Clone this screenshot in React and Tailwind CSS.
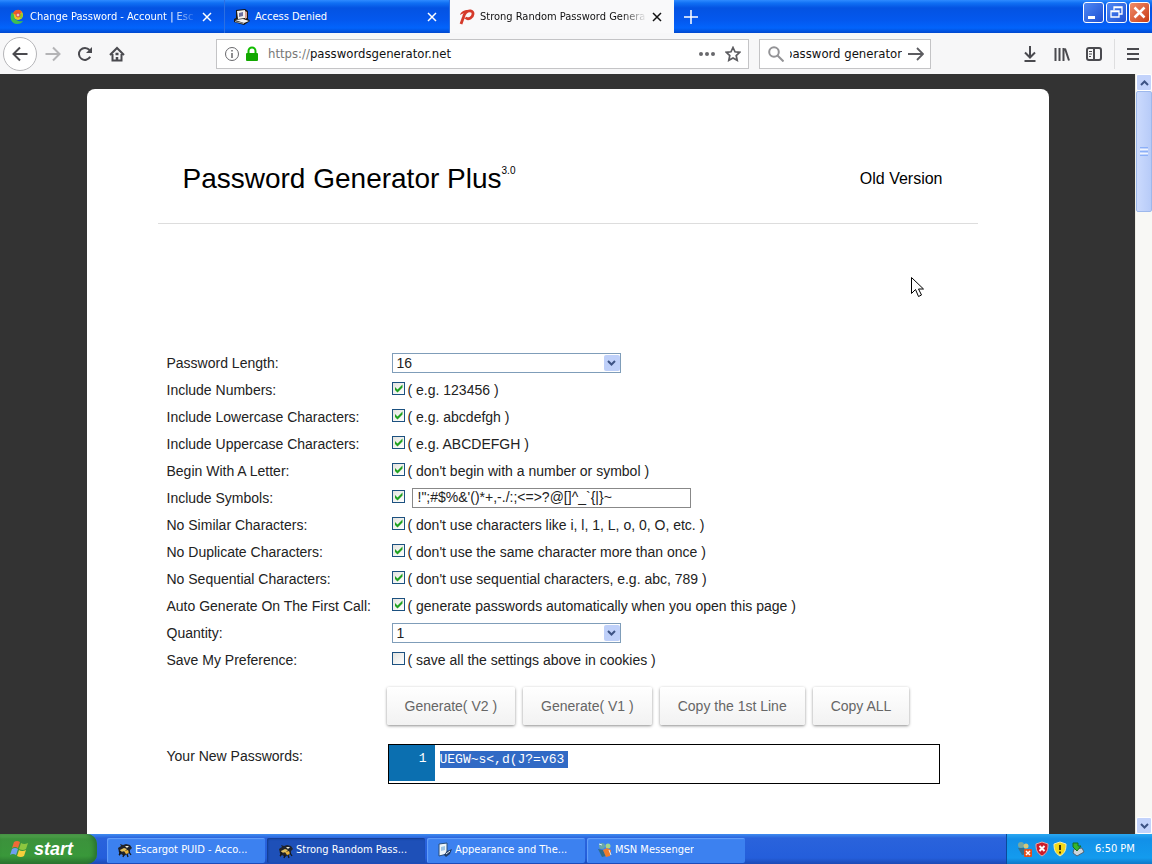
import React from "react";

const ui = "font-['DejaVu_Sans_Condensed','DejaVu_Sans',sans-serif]";

function Bee() {
  return (
    <svg viewBox="0 0 16 16" className="size-4 shrink-0" aria-hidden="true">
      <path d="M1 6l3-2-1-2 3 1 3-1 4 1 2 3-2 2 0 3-3 1-3 2-3-2-2 2 0-4z" fill="#20242c" />
      <path d="M3 8l4-2 3 1-2 2-4 1z" fill="#e0c060" />
      <path d="M8 4l4 0-2 2z" fill="#f4f0dc" />
      <path d="M7 9l4-1 1 3-3 1z" fill="#e7b23a" />
      <path d="M2 9l2 1-2 3M12 10l2 3M7 12l-1 3M10 12l1 3" stroke="#15171c" strokeWidth="1.300" fill="none" />
    </svg>
  );
}

function Panel() {
  return (
    <svg viewBox="0 0 16 16" className="size-4 shrink-0" aria-hidden="true">
      <path d="M2 2l8-1v11l-8 2z" fill="#eef5fa" stroke="#274d7d" />
      <path d="M4 5l4-1v4l-4 1z" fill="#9dc4e5" />
      <path d="M7 13l3-4 5-2-2 5-4 3z" fill="#203c66" />
      <path d="M9 12l4-3" stroke="#e7edf2" />
    </svg>
  );
}

function Buddies() {
  return (
    <svg viewBox="0 0 16 16" className="size-4 shrink-0" aria-hidden="true">
      <circle cx="5" cy="4" r="3" fill="#69a8a8" />
      <path d="M1 7l5 1 3 6-4 1-2-4z" fill="#2d6c8c" />
      <circle cx="11" cy="4" r="2.5" fill="#a5d58b" />
      <path d="M6 8l4-2 4 2-1 6-4 1z" fill="#ef7c2c" />
      <path d="M2 2l3 1M12 8l2 5" stroke="#e5f3f6" />
    </svg>
  );
}

function Escargot() {
  return (
    <svg viewBox="0 0 16 16" className="size-4 shrink-0" aria-hidden="true">
      <circle cx="9" cy="6" r="5" fill="#f0c51e" />
      <path d="M4 5a5 5 0 0 1 9-2L10 6z" fill="#ef5a28" />
      <path d="M13 4a5 5 0 0 1-1 6L9 7z" fill="#8dcc28" />
      <path d="M3 3C0 8 2 15 8 15c3 0 5-1 6-3-5 1-9-1-9-6z" fill="#3ebd53" />
      <circle cx="9" cy="6" r="2" fill="#f4c2c8" stroke="#d8483c" />
    </svg>
  );
}

function Computer() {
  return (
    <svg viewBox="0 0 16 16" className="size-4 shrink-0" aria-hidden="true">
      <path d="M2 1l9-1 3 2v8l2 2-6 4-10-3v-3l2-1z" fill="#171717" />
      <path d="M3 2l8-1v8l-7 1z" fill="#f3f1ee" />
      <path d="M5 4l4-1v4l-4 1z" fill="#6d70a0" />
      <path d="M11 2l2 1v6l-2 1z" fill="#d39f96" />
      <path d="M1 11l8-1 6 2-5 2z" fill="#f3f3f3" />
      <path d="M1 12l9 2v1l-9-2z" fill="#aaa" />
    </svg>
  );
}

function CloseMark() {
  return (
    <svg viewBox="0 0 10 10" className="size-[10px]" aria-hidden="true">
      <path d="M1 1l8 8M9 1L1 9" stroke="currentColor" strokeWidth="1.5" />
    </svg>
  );
}

function Tab({ icon, title, active, fade }) {
  const look = active
    ? "w-[224px] bg-[#f9f9fa] text-[#111]"
    : "w-[225px] border-r border-[#2c6fe2] text-white";
  const mask = fade ? "[mask-image:linear-gradient(to_right,black_85%,transparent)]" : "";
  return (
    <div className={`flex h-full shrink-0 items-center gap-1 pt-px pr-[11px] pl-[9px] ${look}`}>
      {icon}
      <span className={`min-w-0 flex-1 overflow-hidden pl-px whitespace-nowrap ${mask}`}>{title}</span>
      <button type="button" aria-label={`Close ${title}`} className="flex size-[12px] items-center justify-center">
        <CloseMark />
      </button>
    </div>
  );
}

function WindowButton({ label, close, children }) {
  const color = close ? "from-[#f08c68] to-[#c93a0d]" : "from-[#4f88f4] to-[#1f4fd2]";
  return (
    <button
      type="button"
      aria-label={label}
      className={`flex size-[21px] items-center justify-center rounded-[3px] border border-white bg-linear-to-br ${color}`}
    >
      <svg viewBox="0 0 19 19" className="size-[19px]" fill="none" stroke="white" aria-hidden="true">
        {children}
      </svg>
    </button>
  );
}

function TitleBar() {
  return (
    <header className="flex h-[33px] shrink-0 items-stretch bg-[linear-gradient(#2f8bff_0,#1070f4_3px,#0453e2_8px,#0458ee_20px,#0264fc_28px,#0048cf_33px)] text-[11px]">
      <nav className="flex min-w-0 items-stretch" aria-label="Tabs">
        <Tab icon={<Escargot />} title="Change Password - Account | Esc" fade />
        <Tab icon={<Computer />} title="Access Denied" />
        <Tab
          active
          fade
          title="Strong Random Password Genera"
          icon={
            <svg viewBox="0 0 16 16" className="size-4 shrink-0" fill="none" aria-hidden="true">
              <path d="M2 15L4.500 8C6 3 9 1.500 12 2c3 .8 2.500 5.500-.5 7-2 1-4 .8-5-.5" stroke="#d53a2a" strokeWidth="2.800" />
              <path d="M1 6C2 2.500 5 1 9 1L6 4C4 4 3 5 1 6z" fill="#d53a2a" />
            </svg>
          }
        />
        <button type="button" aria-label="New tab" className="flex w-[34px] items-center justify-center text-white">
          <svg viewBox="0 0 14 14" className="size-[14px]" aria-hidden="true">
            <path d="M7 0v14M0 7h14" stroke="currentColor" strokeWidth="1.5" />
          </svg>
        </button>
      </nav>
      <div className="ml-auto flex gap-[2px] pt-[2px] pr-[2px]">
        <WindowButton label="Minimize">
          <path d="M4 14.500h7" strokeWidth="3" />
        </WindowButton>
        <WindowButton label="Restore">
          <path d="M7 7V4h8v7h-3M7 4.500h8" strokeWidth="1.300" />
          <path d="M4 8h8v6H4zM4 8.500h8" strokeWidth="1.300" />
        </WindowButton>
        <WindowButton label="Close" close>
          <path d="M4.500 4.500l10 10M14.500 4.500l-10 10" strokeWidth="2.500" />
        </WindowButton>
      </div>
    </header>
  );
}

function IconButton({ label, className, children }) {
  return (
    <button type="button" aria-label={label} className={`flex shrink-0 items-center justify-center ${className}`}>
      <svg viewBox="0 0 16 16" className="size-4" fill="none" stroke="currentColor" strokeWidth="2" aria-hidden="true">
        {children}
      </svg>
    </button>
  );
}

function Toolbar() {
  return (
    <div className="flex h-[41px] shrink-0 items-center bg-[#f7f7f8] pr-[11px] pl-[3px] text-[12px] text-[#4a4a4f]">
      <IconButton label="Back" className="size-[34px] rounded-full border border-[#b5b5b8] bg-white">
        <path d="M15.500 8H2M8 1.500L1.500 8 8 14.500" />
      </IconButton>
      <IconButton label="Forward" className="w-8 text-[#b4b4b6]">
        <path d="M.5 8H14M8 1.500L14.500 8 8 14.500" />
      </IconButton>
      <IconButton label="Reload" className="w-8">
        <path d="M13.200 10.800A6 6 0 1 1 12.500 4" />
        <path d="M15 1v6H9z" fill="currentColor" stroke="none" />
      </IconButton>
      <IconButton label="Home" className="w-8">
        <path d="M1 9l7-7 7 7M3.500 8v6.500h9V8" />
        <path d="M8 15v-4M6.500 8h3" strokeWidth="2.500" />
      </IconButton>
      <div className="ml-[83px] flex h-[30px] min-w-0 flex-1 items-center gap-1 border border-[#c4c4c6] bg-white px-[7px]">
        <svg viewBox="0 0 16 16" className="size-4 shrink-0" fill="none" stroke="#68686c" aria-hidden="true">
          <circle cx="8" cy="8" r="6.500" />
          <path d="M8 7v5M8 4v1.500" strokeWidth="1.500" />
        </svg>
        <svg viewBox="0 0 16 16" className="size-4 shrink-0" aria-hidden="true">
          <path d="M4.500 8V5a3.500 3.500 0 0 1 7 0v3" fill="none" stroke="#12bc00" strokeWidth="2" />
          <rect x="2" y="7" width="12" height="8" rx="1" fill="#12a800" />
        </svg>
        <a href="https://passwordsgenerator.net" className="flex-1 truncate pl-1 text-[13px] text-[#111]">
          <span className="text-[#777]">https://</span>passwordsgenerator.net
        </a>
        <button type="button" aria-label="Page actions" className="mr-1 flex w-5 justify-center">
          <svg viewBox="0 0 18 4" className="h-1 w-[18px]" fill="#68686c" aria-hidden="true">
            <circle cx="3" cy="2" r="2" />
            <circle cx="9" cy="2" r="2" />
            <circle cx="15" cy="2" r="2" />
          </svg>
        </button>
        <button type="button" aria-label="Bookmark">
          <svg viewBox="0 0 16 16" className="size-4" fill="none" stroke="#5c5c60" strokeWidth="1.700" aria-hidden="true">
            <path d="M8 1.500l2 4.300 4.700.5-3.500 3.200 1 4.800L8 12l-4.200 2.300 1-4.800L1.300 6.300 6 5.800z" />
          </svg>
        </button>
      </div>
      <div className="ml-[10px] flex h-[30px] w-[172px] shrink-0 items-center gap-[6px] border border-[#c4c4c6] bg-white pr-[6px] pl-[8px]">
        <svg viewBox="0 0 16 16" className="size-4 shrink-0" fill="none" stroke="#939396" strokeWidth="2" aria-hidden="true">
          <circle cx="6" cy="6" r="4.800" />
          <path d="M9.500 9.500l6 6" />
        </svg>
        <div className="flex min-w-0 flex-1 justify-end overflow-hidden">
          <input aria-label="Search" defaultValue="password generator" className="w-[118px] shrink-0 text-right text-[13px] text-[#111] outline-none" />
        </div>
        <button type="button" aria-label="Go">
          <svg viewBox="0 0 16 16" className="size-4" fill="none" stroke="#5c5c60" strokeWidth="1.800" aria-hidden="true">
            <path d="M0 8h14M9 2l6 6-6 6" />
          </svg>
        </button>
      </div>
      <div className="ml-[83px] flex shrink-0 items-center">
        <IconButton label="Downloads" className="w-8">
          <path d="M8 0v11M3 6.500l5 5 5-5M2.500 15h11" />
        </IconButton>
        <IconButton label="Library" className="w-8">
          <path d="M1.500 2v13M5.500 2v13M9.500 2v13M11 2.500l4 12" />
        </IconButton>
        <IconButton label="Sidebar" className="w-8">
          <rect x="1" y="2" width="14" height="12" rx="2" />
          <path d="M8 2v12" />
          <path d="M3 5.500h3M3 8h3M3 10.500h2" strokeWidth="1" />
        </IconButton>
        <span className="mr-[10px] ml-1 h-[30px] w-px bg-[#dededf]" />
        <IconButton label="Menu" className="w-4">
          <path d="M2 3h12M2 8h12M2 13h12" />
        </IconButton>
      </div>
    </div>
  );
}

function Chevron({ up }) {
  return (
    <svg viewBox="0 0 9 6" className="h-[6px] w-[9px]" fill="none" stroke="#3d5384" strokeWidth="2" aria-hidden="true">
      <path d={up ? "M1 5l3.500-3.500L8 5" : "M1 1l3.500 3.500L8 1"} />
    </svg>
  );
}

function Scrollbar() {
  const cap = "flex h-[17px] w-full items-center justify-center rounded-[2px] border border-white bg-[#c3d3fb]";
  return (
    <div className="flex w-[17px] shrink-0 flex-col border-l border-[#eeede5] bg-[#f8f8f5]">
      <button type="button" aria-label="Scroll up" className={cap}><Chevron up /></button>
      <div className="flex h-[121px] flex-col items-center justify-center gap-px rounded-[2px] border border-[#9db8ec] bg-linear-to-r from-[#cbdafd] to-[#b7cbf8]">
        <span className="h-px w-2 bg-[#8cb0f8]" />
        <span className="h-px w-2 bg-[#eef4fe]" />
        <span className="h-px w-2 bg-[#8cb0f8]" />
        <span className="h-px w-2 bg-[#eef4fe]" />
        <span className="h-px w-2 bg-[#8cb0f8]" />
      </div>
      <button type="button" aria-label="Scroll down" className={`mt-auto ${cap}`}><Chevron /></button>
    </div>
  );
}

function Select({ id, value, options }) {
  return (
    <div className="grid h-5 w-[229px] items-center">
      <select
        id={id}
        defaultValue={value}
        className="col-start-1 row-start-1 h-5 w-full appearance-none border border-[#7f9db9] bg-white pl-1 text-[14px] leading-[18px] text-[#222] outline-none"
      >
        {options.map((o) => <option key={o}>{o}</option>)}
      </select>
      <span className="pointer-events-none col-start-1 row-start-1 mr-px flex h-4 w-4 items-center justify-center justify-self-end rounded-[2px] bg-[#bfd0f9]">
        <Chevron />
      </span>
    </div>
  );
}

function Check({ id, checked }) {
  return (
    <span className="mb-[3px] grid size-[13px] shrink-0">
      <input
        id={id}
        type="checkbox"
        defaultChecked={checked}
        className="peer col-start-1 row-start-1 size-[13px] appearance-none border border-[#1c5180] bg-linear-to-br from-[#e4e4df] to-white"
      />
      <svg viewBox="0 0 13 13" className="pointer-events-none col-start-1 row-start-1 hidden size-[13px] peer-checked:block" aria-hidden="true">
        <path d="M3 5v3l2.500 2.500L10.500 5.500v-3L5.500 7.500z" fill="#21a121" />
      </svg>
    </span>
  );
}

function Row({ id, label, children }) {
  return (
    <div className="grid h-[27px] grid-cols-[225px_1fr] items-center">
      <label htmlFor={id}>{label}</label>
      <div className="flex items-center pb-[2px]">{children}</div>
    </div>
  );
}

function CheckRow({ id, label, hint, checked = true }) {
  return (
    <Row id={id} label={label}>
      <Check id={id} checked={checked} />
      <span className="pt-[2px] pl-[3px]">{hint}</span>
    </Row>
  );
}

function ActionButton({ children }) {
  return (
    <button
      type="button"
      className="h-[38px] rounded-[2px] bg-linear-to-b from-white to-[#f2f2f2] px-[18px] text-[14px] text-[#666] shadow-[0_1px_3px_rgba(0,0,0,0.45)]"
    >
      {children}
    </button>
  );
}

function Page() {
  return (
    <main className="min-w-0 flex-1 overflow-hidden bg-[#333] pt-[15px] font-['Liberation_Sans',Arial,sans-serif] text-[14px] text-[#222]">
      <div className="mx-auto min-h-full w-full max-w-[962px] rounded-t-lg bg-white px-[71px] pt-[46px]">
        <div className="flex h-[89px] items-center justify-between border-b border-[#ddd] pr-[35px] pl-[25px] text-black">
          <h1 className="flex items-start text-[28px] leading-8">
            Password Generator Plus<sup className="top-0 text-[10px] leading-4">3.0</sup>
          </h1>
          <a href="#old" className="text-[16px]">Old Version</a>
        </div>
        <form className="pt-[126px] pl-[9px]" onSubmit={(e) => e.preventDefault()}>
          <Row id="length" label="Password Length:">
            <Select id="length" value="16" options={["8", "12", "16", "24", "32"]} />
          </Row>
          <CheckRow id="numbers" label="Include Numbers:" hint="( e.g. 123456 )" />
          <CheckRow id="lower" label="Include Lowercase Characters:" hint="( e.g. abcdefgh )" />
          <CheckRow id="upper" label="Include Uppercase Characters:" hint="( e.g. ABCDEFGH )" />
          <CheckRow id="begin" label="Begin With A Letter:" hint="( don't begin with a number or symbol )" />
          <Row id="symbols" label="Include Symbols:">
            <Check id="symbols" checked />
            <input
              aria-label="Symbols"
              defaultValue={"!\";#$%&'()*+,-./:;<=>?@[]^_`{|}~"}
              className="ml-[7px] h-5 w-[279px] border border-[#888] px-[5px] text-[14px] outline-none"
            />
          </Row>
          <CheckRow id="similar" label="No Similar Characters:" hint="( don't use characters like i, l, 1, L, o, 0, O, etc. )" />
          <CheckRow id="duplicate" label="No Duplicate Characters:" hint="( don't use the same character more than once )" />
          <CheckRow id="sequential" label="No Sequential Characters:" hint="( don't use sequential characters, e.g. abc, 789 )" />
          <CheckRow id="auto" label="Auto Generate On The First Call:" hint="( generate passwords automatically when you open this page )" />
          <Row id="quantity" label="Quantity:">
            <Select id="quantity" value="1" options={["1", "5", "10", "50"]} />
          </Row>
          <CheckRow id="save" label="Save My Preference:" hint="( save all the settings above in cookies )" checked={false} />
          <div className="flex gap-2 pt-[13px] pl-[220px]">
            <ActionButton>Generate( V2 )</ActionButton>
            <ActionButton>Generate( V1 )</ActionButton>
            <ActionButton>Copy the 1st Line</ActionButton>
            <ActionButton>Copy ALL</ActionButton>
          </div>
          <div className="grid grid-cols-[221px_1fr] pt-[19px] pr-[38px] leading-6">
            <span>Your New Passwords:</span>
            <output className="flex h-10 items-start border border-black font-['Liberation_Mono','Courier_New',monospace] text-[13px]">
              <span className="h-9 w-[46px] bg-[#0b6fb0] pt-[2px] pr-2 text-right text-white">1</span>
              <span className="mt-[6px] ml-[5px] bg-[#316ac5] pr-1 leading-[17px] text-white">{"UEGW~s<,d(J?=v63"}</span>
            </output>
          </div>
        </form>
      </div>
    </main>
  );
}

function Task({ icon, active, children }) {
  const look = active
    ? "bg-[#1e50b8] pt-px pl-[11px] shadow-[inset_1px_1px_2px_#123a8c]"
    : "bg-[#3c81f0] pl-[10px] shadow-[inset_1px_1px_1px_#65a0fa]";
  return (
    <button type="button" className={`flex h-[25px] w-[158px] min-w-0 items-center gap-[2px] rounded-[2px] pr-3 text-left ${look}`}>
      {icon}
      <span className="truncate">{children}</span>
    </button>
  );
}

function Taskbar() {
  return (
    <footer className="flex h-[30px] shrink-0 items-stretch bg-[linear-gradient(#3f8cf0_0,#2a63dc_4px,#245edb_24px,#1c49b5_30px)] text-[11px] text-white">
      <button
        type="button"
        className="flex w-[97px] items-center gap-1 rounded-r-[10px] bg-[linear-gradient(#5eac56_0,#3c923c_5px,#39983a_22px,#2a7430_30px)] pl-[10px] font-['Liberation_Sans',Arial,sans-serif] text-[18px] font-bold italic shadow-[inset_-3px_0_4px_#2a7430]"
      >
        <svg viewBox="0 0 20 18" className="h-[18px] w-5" aria-hidden="true">
          <path d="M4 2q3-2 6 0L8 8Q5 6 2 8z" fill="#ef6a38" />
          <path d="M11 3q3 2 7 0l-2 6q-3 2-7 0z" fill="#8cc63f" />
          <path d="M2 9q3-2 6 0l-2 6q-3-2-6 0z" fill="#6fa0f0" />
          <path d="M9 10q3 2 7 0l-2 6q-3 2-7 0z" fill="#f7cf3c" />
        </svg>
        start
      </button>
      <nav aria-label="Open windows" className="flex min-w-0 flex-1 items-center gap-[2px] pt-[2px] pl-[10px]">
        <Task icon={<Bee />}>Escargot PUID - Acco...</Task>
        <Task icon={<Bee />} active>Strong Random Pass...</Task>
        <Task icon={<Panel />}>Appearance and The...</Task>
        <Task icon={<Buddies />}>MSN Messenger</Task>
      </nav>
      <div className="flex w-[146px] shrink-0 items-center gap-[2px] border-l border-[#0b4a9a] bg-[linear-gradient(#2aa8f2_0,#1290e8_5px,#139bee_24px,#0f78c8_30px)] pl-[9px]">
        <svg viewBox="0 0 16 16" className="size-4" aria-hidden="true">
          <circle cx="5" cy="4" r="3" fill="#78a8a0" />
          <path d="M2 7h6l3 6-5 1z" fill="#35708c" />
          <circle cx="10" cy="5" r="2.500" fill="#d8c878" />
          <rect x="8" y="8" width="8" height="8" rx="1" fill="#e3501c" />
          <path d="M10 10l4 4M14 10l-4 4" stroke="white" strokeWidth="1.500" />
        </svg>
        <svg viewBox="0 0 16 16" className="size-4" aria-hidden="true">
          <path d="M8 1l6 2c0 6-1 9-6 12C3 12 2 9 2 3z" fill="#cb1b2a" stroke="#e6a6a6" />
          <path d="M5.500 5l5 5M10.500 5l-5 5" stroke="white" strokeWidth="2" />
        </svg>
        <svg viewBox="0 0 16 16" className="size-4" aria-hidden="true">
          <path d="M8 1l6 2c0 6-1 9-6 12C3 12 2 9 2 3z" fill="#f5d818" stroke="#f4eeb4" />
          <path d="M8 4v5M8 10.500v2" stroke="#453a08" strokeWidth="2" />
        </svg>
        <svg viewBox="0 0 16 16" className="size-4" aria-hidden="true">
          <path d="M4 8l8-1 2 4-7 4-4-3z" fill="#ccd5dc" stroke="#4c6577" />
          <path d="M3 2l5 0v3l3 0-4 5-4-4z" fill="#35b52d" stroke="#176f20" />
        </svg>
        <time className="pl-[7px] whitespace-nowrap">6:50 PM</time>
      </div>
    </footer>
  );
}

export default function App() {
  return (
    <div className={`relative flex h-screen flex-col overflow-hidden ${ui}`}>
      <TitleBar />
      <Toolbar />
      <div className="flex min-h-0 flex-1">
        <Page />
        <Scrollbar />
      </div>
      <Taskbar />
      <svg viewBox="0 0 13 21" className="pointer-events-none absolute top-[277px] left-[911px] h-[21px] w-[13px]" aria-hidden="true">
        <path d="M.5.5v16l4-4 3 7 3-1.500-3-6h5z" fill="white" stroke="black" />
      </svg>
    </div>
  );
}
